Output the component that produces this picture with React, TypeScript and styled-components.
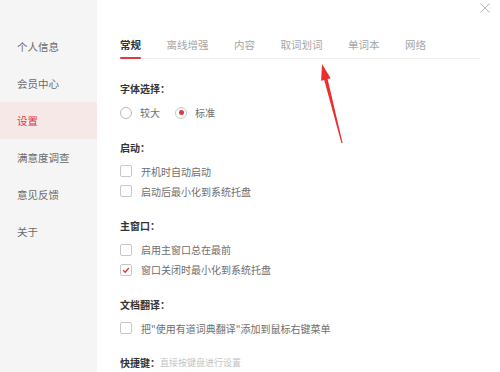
import React from "react";
import styled, { createGlobalStyle } from "styled-components";

const Global = createGlobalStyle`
  html, body { margin: 0; padding: 0; background: #fff; }
  body { font-family: "Noto Sans CJK SC", "Noto Sans", sans-serif; }
  * { box-sizing: border-box; }
`;

const Page = styled.div`
  position: relative;
  width: 500px;
  height: 372px;
  display: flex;
  overflow: hidden;
  background: #fff;
`;

const Sidebar = styled.nav`
  width: 97px;
  flex: none;
  background: #f5f5f5;
  padding-top: 28px;
  display: flex;
  flex-direction: column;
`;

const NavItem = styled.div<{ $active?: boolean }>`
  height: 37px;
  flex: none;
  display: flex;
  align-items: center;
  padding-left: 17px;
  font-size: 10.5px;
  color: ${(p) => (p.$active ? "#e0393e" : "#6a6a6a")};
  background: ${(p) => (p.$active ? "#f7e8e8" : "transparent")};
`;

const Main = styled.main`
  flex: 1;
  display: flex;
  flex-direction: column;
  padding: 0 20px 0 23px;
  & > * { flex-shrink: 0; }
`;

const TopBar = styled.div`
  height: 20px;
  display: flex;
  justify-content: flex-end;
  align-items: flex-start;
  padding-top: 3px;
  margin-right: -10px;
`;

const CloseBtn = styled.div`
  width: 10px;
  height: 10px;
  display: flex;
`;

const Tabs = styled.div`
  margin-top: 18px;
  display: flex;
  gap: 25.5px;
  border-bottom: 1px solid #ededed;
`;

const Tab = styled.div<{ $active?: boolean }>`
  position: relative;
  font-size: 10.5px;
  line-height: 14px;
  padding-bottom: 6px;
  color: ${(p) => (p.$active ? "#333" : "#a6a6a6")};
  font-weight: ${(p) => (p.$active ? 700 : 400)};
  &::after {
    content: "";
    display: ${(p) => (p.$active ? "block" : "none")};
    position: absolute;
    left: 0;
    right: 0;
    bottom: -1px;
    height: 2px;
    border-radius: 1px;
    background: #e0393e;
  }
`;

const Content = styled.div`
  padding-top: 20px;
  display: flex;
  flex-direction: column;
  gap: 15px;
  & > * { flex-shrink: 0; }
`;

const Section = styled.section`
  display: flex;
  flex-direction: column;
  & > * { flex-shrink: 0; }
`;

const Heading = styled.div`
  font-size: 10px;
  line-height: 20px;
  height: 20px;
  font-weight: 700;
  color: #333;
  margin-bottom: 3.5px;
  display: flex;
  align-items: center;
`;

const Hint = styled.span`
  font-size: 9px;
  font-weight: 400;
  color: #c4c4c4;
`;

const Row = styled.div`
  height: 20px;
  display: flex;
  align-items: center;
  font-size: 10px;
  color: #6e6e6e;
`;

const Option = styled.label`
  display: flex;
  align-items: center;
  gap: 8px;
  margin-right: 15px;
`;

const RadioCircle = styled.span<{ $checked?: boolean }>`
  width: 12px;
  height: 12px;
  border-radius: 50%;
  border: 1px solid ${(p) => (p.$checked ? "#c8c8c8" : "#b8b8b8")};
  background: #fff;
  display: flex;
  align-items: center;
  justify-content: center;
  &::after {
    content: "";
    display: ${(p) => (p.$checked ? "block" : "none")};
    width: 5px;
    height: 5px;
    border-radius: 50%;
    background: #dd3b3f;
  }
`;

const CheckBox = styled.span`
  width: 12px;
  height: 12px;
  border: 1px solid #c8c8c8;
  border-radius: 2px;
  background: #fff;
  display: flex;
  align-items: center;
  justify-content: center;
  margin-right: 9px;
  flex: none;
`;

const Arrow = styled.svg`
  position: absolute;
  left: 0;
  top: 0;
  pointer-events: none;
`;

function Check({ checked }: { checked?: boolean }) {
  return (
    <CheckBox>
      {checked && (
        <svg width="10" height="10" viewBox="0 0 10 10">
          <polyline points="2.2,5.2 4.2,7.2 7.8,3" fill="none" stroke="#d9363b" strokeWidth="1.3" />
        </svg>
      )}
    </CheckBox>
  );
}

const navs = ["个人信息", "会员中心", "设置", "满意度调查", "意见反馈", "关于"];
const tabs = ["常规", "离线增强", "内容", "取词划词", "单词本", "网络"];

export default function App() {
  return (
    <Page>
      <Global />
      <Sidebar>
        {navs.map((n) => (
          <NavItem key={n} $active={n === "设置"}>
            {n}
          </NavItem>
        ))}
      </Sidebar>
      <Main>
        <TopBar>
          <CloseBtn>
            <svg width="10" height="10" viewBox="0 0 10 10">
              <path d="M0.5 0.5 L9.5 9.5 M9.5 0.5 L0.5 9.5" stroke="#b5b5b5" strokeWidth="1" />
            </svg>
          </CloseBtn>
        </TopBar>
        <Tabs>
          {tabs.map((t) => (
            <Tab key={t} $active={t === "常规"}>
              {t}
            </Tab>
          ))}
        </Tabs>
        <Content>
          <Section>
            <Heading>字体选择：</Heading>
            <Row>
              <Option>
                <RadioCircle />
                较大
              </Option>
              <Option>
                <RadioCircle $checked />
                标准
              </Option>
            </Row>
          </Section>
          <Section>
            <Heading>启动：</Heading>
            <Row>
              <Check />
              开机时自动启动
            </Row>
            <Row>
              <Check />
              启动后最小化到系统托盘
            </Row>
          </Section>
          <Section>
            <Heading>主窗口：</Heading>
            <Row>
              <Check />
              启用主窗口总在最前
            </Row>
            <Row>
              <Check checked />
              窗口关闭时最小化到系统托盘
            </Row>
          </Section>
          <Section>
            <Heading>文档翻译：</Heading>
            <Row>
              <Check />
              把"使用有道词典翻译"添加到鼠标右键菜单
            </Row>
          </Section>
          <Section>
            <Heading>
              快捷键：<Hint>直接按键盘进行设置</Hint>
            </Heading>
          </Section>
        </Content>
      </Main>
      <Arrow width="500" height="372" viewBox="0 0 500 372">
        <polygon
          points="322,64 330.7,78.3 327.6,79.1 342.6,142.9 341.4,143.1 324.2,80 321.1,80.7"
          fill="#e8302f"
        />
      </Arrow>
    </Page>
  );
}
